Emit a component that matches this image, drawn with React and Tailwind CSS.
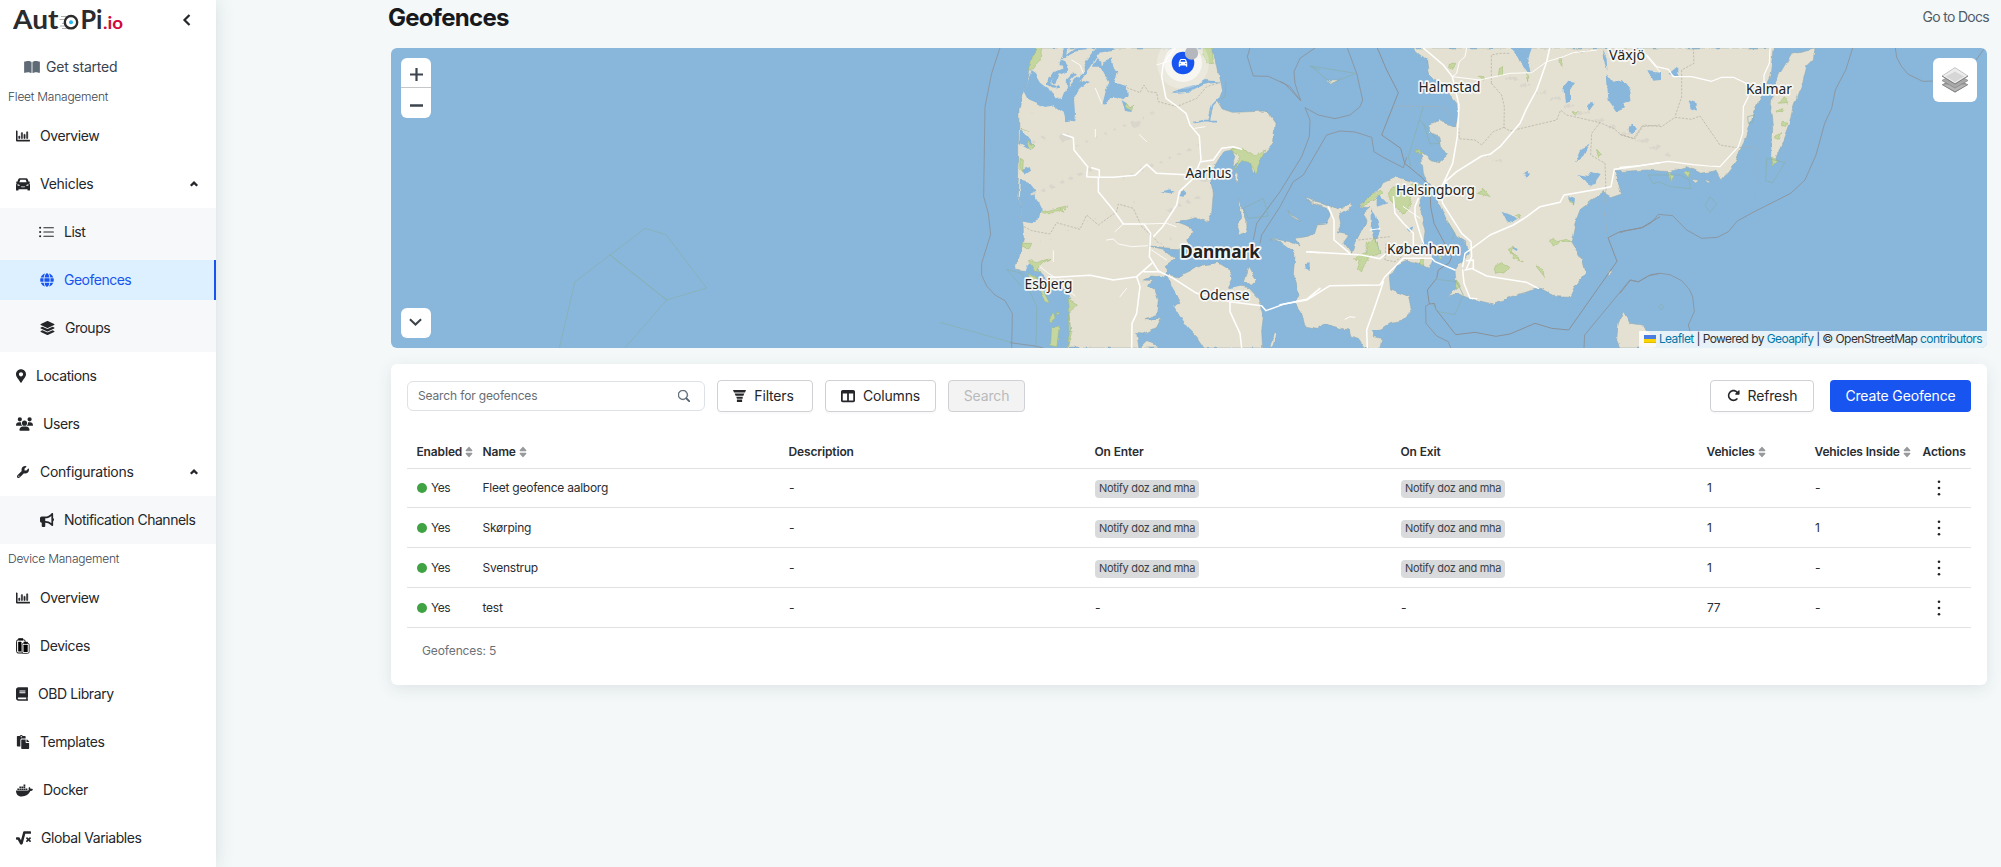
import {
  FaRegChartBar, FaGlobe, FaLayerGroup, FaMapMarkerAlt, FaBook, FaPaste,
  FaDocker, FaSquareRootAlt, FaSort,
} from "react-icons/fa";
import { FaUsers, FaWrench, FaBullhorn, FaBookOpen, FaRotateRight, FaTableColumns, FaCar } from "react-icons/fa6";
import { BsListUl, BsSearch } from "react-icons/bs";

const DevicesIcon = ({ className }) => (
  <svg viewBox="0 0 14 16" className={className}>
    <rect x="0.6" y="1.8" width="8.6" height="13.2" rx="1.6" fill="#fff" stroke="#111" strokeWidth="1" />
    <rect x="2.3" y="0.2" width="4.8" height="2.2" fill="#111" />
    <rect x="2.2" y="3.8" width="3.2" height="9.8" rx="0.5" fill="#000" />
    <rect x="6" y="5.2" width="7.2" height="10.2" rx="1.6" fill="#fff" stroke="#111" strokeWidth="0.8" />
    <rect x="7.6" y="3.8" width="4.2" height="2" fill="#111" />
    <rect x="7.5" y="6.8" width="4.2" height="7.2" rx="0.5" fill="#000" />
  </svg>
);

const CarIcon = ({ className }) => (
  <svg viewBox="0 0 14 14" className={className} fill="currentColor" fillRule="evenodd">
    <path d="M3.900 1.200h6.200c.8 0 1.400.4 1.700 1.200l.9 2.300.9-.2.4.9-.9.600c.6.500.9 1.100.9 1.900v5c0 .4-.3.700-.7.700h-1.100c-.4 0-.7-.3-.7-.7v-.7h-9v.7c0 .4-.3.700-.7.700H.7c-.4 0-.7-.3-.7-.7v-5C0 7.100.3 6.500.9 6L0 5.400l.4-.9.9.2.9-2.300c.3-.8.9-1.200 1.700-1.200zM3.400 5.300h7.200l-.8-2.200c-.1-.2-.2-.3-.4-.3H4.600c-.2 0-.3.1-.4.3zM1.500 7.300v1.200l2.300.4-.5-1.100zM12.500 7.300v1.200l-2.300.4.5-1.100zM4.800 9.300l.6.900h3.200l.6-.9-.6.300H5.400z" />
  </svg>
);

const FunnelIcon = () => (
  <svg viewBox="0 0 13 12" className="h-3 w-[13px]" fill="#24262a">
    <path d="M0 0h13l-1 2.6H1zM1.7 3.6h9.6l-.9 2.2H2.6zM3.3 6.7h6.4v2H3.9zM3.9 9.6h5.2V12H3.9z" />
  </svg>
);

const Chevron = ({ d, className }) => (
  <svg viewBox="0 0 14 14" className={className} fill="none" stroke="currentColor" strokeWidth="2.2">
    <path d={d} />
  </svg>
);

const Logo = () => (
  <svg width="116" height="28" viewBox="0 0 116 28" className="block" fontFamily="Lato, sans-serif">
    <text x="0" y="24" fontSize="26" fontWeight="700" fill="#2b2b2d" textLength="45.500" lengthAdjust="spacingAndGlyphs">Aut</text>
    <g stroke="#9a9a9a" strokeWidth="0.8">
      <path d="M48 11.500h8M46.500 14.500h5M49 18.500h3M47 21h5M49 23.500h7" />
    </g>
    <circle cx="58" cy="17.200" r="6.200" fill="#fff" stroke="#2b2b2d" strokeWidth="2.400" />
    <circle cx="58" cy="17.200" r="2" fill="#22b8f0" />
    <text x="67.500" y="24" fontSize="26" fontWeight="700" fill="#2b2b2d" textLength="22" lengthAdjust="spacingAndGlyphs">Pi</text>
    <text x="90" y="24" fontSize="17" fontWeight="700" fill="#cf0a3c" textLength="20" lengthAdjust="spacingAndGlyphs">.io</text>
  </svg>
);

const NavItem = ({ Icon, iw, label, open, sub, active }) => (
  <div
    className={`flex items-center gap-[10px] ${
      sub
        ? active
          ? "my-1 h-10 border-r-2 border-[#1754f0] bg-[#ddf0ff] pl-10 text-[#1754f0]"
          : "h-12 pl-10"
        : "h-12 pl-4"
    }`}
  >
    <Icon className={`h-[14px] shrink-0 ${iw}`} />
    <span className={`whitespace-nowrap text-sm ${sub ? "tracking-[-0.036em]" : open ? "tracking-[-0.02em]" : "tracking-[-0.03em]"}`}>{label}</span>
    {open && <Chevron d="M2.500 9.500 7 5l4.500 4.500" className="ml-auto mr-[17px] size-[10px] [stroke-width:3.2]" />}
  </div>
);

const Sidebar = () => (
  <aside className="relative z-10 h-full w-[216px] shrink-0 overflow-hidden bg-white text-[#24262a] shadow-[0_0_18px_rgba(40,70,70,0.14)]">
    <div className="flex h-[46px] items-start pl-[13px] pt-[5px]">
      <Logo />
      <Chevron d="M9.500 2 4.500 7l5 5" className="ml-auto mr-[22px] mt-2 size-[14px]" />
    </div>
    <div className="flex h-[38px] items-center gap-[6px] pl-6 pt-1 text-[#3a434d]">
      <FaBookOpen className="h-[14px] w-4 text-[#5f6b76]" />
      <span className="text-sm tracking-[-0.015em]">Get started</span>
    </div>
    <div className="flex h-7 items-center pb-[2px] pl-2 text-xs font-light tracking-[-0.02em] text-[#3d4650]">Fleet Management</div>
    <NavItem Icon={FaRegChartBar} iw="w-[14px] [stroke:currentColor] [stroke-width:16]" label="Overview" />
    <NavItem Icon={CarIcon} iw="w-[14px]" label="Vehicles" open />
    <div className="bg-[#f7f8fa]">
      <NavItem sub Icon={BsListUl} iw="!h-[17px] w-[17px] -ml-[2px] -mr-px" label="List" />
      <NavItem sub active Icon={FaGlobe} iw="w-[14px]" label="Geofences" />
      <NavItem sub Icon={FaLayerGroup} iw="w-[15px]" label="Groups" />
    </div>
    <NavItem Icon={FaMapMarkerAlt} iw="w-[10px]" label="Locations" />
    <NavItem Icon={FaUsers} iw="w-[17px]" label="Users" />
    <NavItem Icon={FaWrench} iw="w-[14px] p-px" label="Configurations" open />
    <div className="bg-[#f7f8fa]">
      <NavItem sub Icon={FaBullhorn} iw="w-[14px]" label="Notification Channels" />
    </div>
    <div className="flex h-[30px] items-center pl-2 text-xs font-light tracking-[-0.02em] text-[#3d4650]">Device Management</div>
    <NavItem Icon={FaRegChartBar} iw="w-[14px] [stroke:currentColor] [stroke-width:16]" label="Overview" />
    <NavItem Icon={DevicesIcon} iw="w-[14px] !h-4" label="Devices" />
    <NavItem Icon={FaBook} iw="w-3" label="OBD Library" />
    <NavItem Icon={FaPaste} iw="w-[14px]" label="Templates" />
    <NavItem Icon={FaDocker} iw="w-[17px] !h-[17px]" label="Docker" />
    <NavItem Icon={FaSquareRootAlt} iw="w-[15px]" label="Global Variables" />
  </aside>
);

/* Map geometry. Every layer is drawn at three times its size on screen. */
const WEST = "translate(549 -8) scale(.33333)";
const EAST = "translate(889 -8) scale(.33333)";
const FAR_EAST = "translate(1229 -48) scale(.33333)";
const SEA = "translate(-11 -48) scale(.33333)";

const westLand = [
  // Jutland
  "M290 24 278 55 268 85 258 130 245 170 237 210 236 300 236 400 232 470 240 500 250 560 250 600 235 660 227 690 270 697 300 740 345 772 380 780 388 830 392 880 380 924H597L590 880 612 882 650 862 665 832 640 838 612 836 650 822 655 780 645 750 625 735 640 722 610 720 635 708 670 712 680 690 672 680 705 655 670 628 625 617 690 625 755 628 740 600 764 572 750 560 710 545 770 530 800 548 815 520 820 460 812 420 820 385 850 335 880 330 886 345 875 380 905 362 930 366 940 402 955 360 1000 312 1005 250 980 213 880 217 850 207 833 180 845 150 838 120 830 80 818 24Z",
  // Fyn
  "M684 702 720 712 735 700 790 674 835 668 870 690 880 705 862 745 895 738 925 742 955 775 970 830 965 870 968 924H792L770 890 750 870 725 862 712 835 700 800 720 790 695 740Z",
  "M925 675 935 700 948 720 935 732 910 728 918 700Z",
  // Samsø, Anholt and the small isles
  "M893 475 905 500 920 540 921 575 900 585 893 560 905 530Z",
  "M885 400 897 400 895 425 886 420ZM990 924 1000 882 1008 880 998 924ZM1045 515 1075 540 1060 530ZM1095 470 1140 492 1115 492Z",
  "M600 924 620 905 650 915 655 924Z",
];

const eastLand = [
  // Sjælland
  "M-30 598 0 600 30 605 60 618 48 595 78 590 100 580 108 555 140 552 150 525 140 505 110 495 80 482 112 488 150 498 175 510 212 490 205 508 180 525 185 550 172 578 205 585 190 605 215 640 225 610 245 570 258 545 248 520 270 500 235 497 270 470 310 430 350 411 400 425 432 445 420 480 425 530 435 575 430 610 440 640 458 660 445 685 420 672 385 660 350 675 328 710 332 750 385 770 396 815 370 840 330 848 300 870 280 875 280 890 305 895 300 924H255L235 895 210 888 205 870 170 862 130 850 110 865 75 858 65 820 45 790 60 770 40 700 45 650 35 630 0 605Z",
  // Sweden
  "M400 24 440 60 445 100 490 140 530 190 535 230 525 260 480 243 450 255 447 275 480 290 485 320 502 345 480 365 455 360 405 328 425 345 430 400 455 440 500 540 530 590 560 610 565 640 525 690 530 745 500 768 535 760 570 775 640 792 690 770 780 745 830 770 870 772 885 740 915 700 905 660 873 610 885 550 900 510 970 455 995 470 1025 460 1012 425 1005 395 1100 390 1170 395 1220 380 1260 400 1310 392 1325 420 1345 395 1365 370 1385 320 1400 290 1420 220 1450 150 1470 110 1480 24Z",
  // Öland
  "M1605 24 1600 60 1580 80 1570 120 1540 200 1525 260 1495 340 1480 372 1475 360 1478 260 1472 210 1480 140 1500 100 1535 40Z",
  // Bornholm
  "M1030 815 1050 850 1085 855 1130 900 1130 924H1020L1010 900 1015 850Z",
  "M142 120 178 120 155 132ZM22 515 60 540 45 535ZM985 690 998 695 985 705Z",
  "M1235 415 1260 418 1250 426ZM1270 420 1290 430 1280 432Z",
];

const westWater = [
  "M272 90 285 100 300 125 325 145 345 178 368 175 378 150 400 132 430 120 450 126 430 137 415 152 402 178 405 215 403 240 375 244 368 215 350 203 340 196 315 201 290 188 262 176 250 152 262 120Z",
  "M455 80 470 55 490 65 515 55 523 90 535 95 522 125 560 135 563 165 550 178 530 170 510 172 495 198 488 190 498 150 508 130 480 80Z",
  "M545 180 560 190 565 205 578 200 570 216 555 212Z",
  "M240 260 262 290 285 318 270 330 238 312Z",
  "M240 418 265 425 285 450 288 475 305 510 300 540 275 550 248 545 236 480Z",
  "M245 390 265 382 270 395 255 405ZM256 610 275 615 270 628 258 625Z",
  "M265 670 290 680 300 700 330 730 380 745 392 790 385 850 388 900 376 924H300L262 740 255 700Z",
  "M662 455 690 448 708 456 690 460ZM718 468 728 450 742 464 730 470Z",
  "M692 160 760 138 795 120 840 125 790 135 750 155Z",
  "M870 700 905 715 915 735 890 742 866 748 880 725Z",
];

const eastWater = [
  "M290 480 300 465 325 490 290 500ZM275 505 288 530 300 570 290 600 300 640 258 640 280 600 275 560Z",
  "M850 140 865 122 885 125 870 150 870 185 855 190ZM690 24 755 24 745 60 755 95 735 90 715 50Z",
  "M980 100 1000 125 1025 120 1050 150 1055 180 1030 190 1035 205 1010 215 985 180ZM966 28 980 60 982 90 970 60Z",
  "M922 200 935 182 945 190 930 210ZM1043 262 1058 254 1068 268 1056 282 1044 276ZM885 370 905 325 928 315 910 350Z",
  "M892 402 925 408 935 395 962 405 945 430 930 440 915 420ZM730 400 740 396 750 408 740 416ZM665 515 690 525 715 540 700 550 680 545Z",
  "M868 468 888 478 885 495 870 488ZM698 620 715 628 710 636 700 630ZM1105 90 1140 95 1140 120 1120 122Z",
  "M1165 105 1195 80 1195 112ZM1225 180 1250 190 1250 212 1235 205ZM380 570 398 560 390 580ZM72 672 86 670 86 690 74 686ZM370 470 385 475 378 490Z",
  "M275 870 300 870 290 892Z",
];

const westGreen = [
  "M290 24 305 24 300 60 285 85 265 90 275 50ZM790 24 818 24 820 70 800 72 790 50Z",
  "M875 328 905 325 950 345 975 328 965 355 948 400 930 370 905 365 882 390 900 350Z",
  "M305 515 380 498 375 510 360 506 372 520 355 512 312 520ZM240 355 250 360 248 395 240 385Z",
  "M240 262 265 272M258 300 285 318 270 330ZM245 610 278 610 270 630 250 620ZM265 660 290 668 330 655 300 675 290 690 300 700 285 695Z",
  "M262 700 290 715 328 788 315 785 295 745ZM385 780 412 795 390 818ZM335 860 358 860 350 920 332 915ZM328 840 340 820 345 835 332 845ZM350 815 360 820 350 825Z",
  "M555 200 560 190 570 205 578 195 575 215ZM384 820 394 880 382 924 388 880Z",
];

const eastGreen = [
  "M240 497 275 465 300 450 310 458 285 480ZM340 440 375 445 400 430 420 440 385 460 395 490 370 525 355 505 330 480 325 460Z",
  "M220 655 260 640 265 610 285 590 300 640 270 645 245 695 232 688 240 665Z",
  "M508 70 524 70 518 88 505 85ZM655 85 668 82 668 102 652 104ZM597 108 613 110 608 118ZM838 55 848 58 845 82ZM740 100 750 105 746 125Z",
  "M592 460 610 450 627 470ZM685 625 700 618 692 640 730 665 700 655ZM645 678 665 668 686 682 672 702 650 698ZM768 678 788 685 793 710Z",
  "M808 600 820 592 830 605 860 598 872 608 840 605 820 618ZM876 215 895 215 888 230ZM950 328 965 345 955 352ZM405 328 425 342 410 338ZM705 528 718 522 720 535ZM868 480 885 495 872 490Z",
  "M420 660 430 655 430 680 420 675ZM530 720 538 740 525 745ZM475 640 485 650 480 660ZM1495 190 1515 188 1522 190 1510 170ZM1488 210 1512 206 1508 215 1490 214ZM1505 250 1520 252 1518 262 1505 260ZM1488 285 1502 278 1495 298 1485 295ZM1475 352 1495 360 1480 378ZM1165 395 1180 410 1170 425ZM1210 395 1230 392 1225 412Z",
];

const cities = [
  ["Aarhus", 817.500, 130.300, 46], ["Esbjerg", 657.500, 241.200, 48], ["Odense", 833.500, 251.700, 50],
  ["Halmstad", 1058.500, 44, 62], ["Helsingborg", 1044.500, 147.200, 79], ["København", 1032.500, 205.500, 73],
  ["Växjö", 1236, 11.800, 36], ["Kalmar", 1378, 45.700, 46],
];

const speckles = Array.from({ length: 90 }, (_, i) => [
  i < 45 ? 270 + ((i * 137) % 520) : 1620 + ((i * 173) % 560),
  i < 45 ? 220 + ((i * 97) % 400) : 100 + ((i * 83) % 270),
  3 + (i % 4) * 2,
]);

const MapCanvas = () => (
  <svg viewBox="0 0 1596 300" className="block h-full w-full" fill="none">
    <defs>
      <filter id="coast" x="-5%" y="-5%" width="110%" height="110%">
        <feTurbulence type="fractalNoise" baseFrequency="0.09" numOctaves="3" seed="4" />
        <feDisplacementMap in="SourceGraphic" scale="5" xChannelSelector="R" yChannelSelector="G" />
      </filter>
    </defs>
    <rect width="1596" height="300" fill="#89b7dc" />
    <g filter="url(#coast)">
      <g transform={WEST} fill="#e5e1d2" stroke="#8ba5ac" strokeWidth="1.500">
        {westLand.map((d) => <path key={d} d={d} />)}
      </g>
      <g transform={EAST} fill="#e5e1d2" stroke="#8ba5ac" strokeWidth="1.500">
        {eastLand.map((d) => <path key={d} d={d} />)}
      </g>
      <g transform={WEST} fill="#89b7dc">
        {westWater.map((d) => <path key={d} d={d} />)}
        <g fill="none" stroke="#89b7dc" strokeLinejoin="round">
          <path d="M378 24 374 50 365 70 378 88 350 100 340 130" strokeWidth="13" />
          <path d="M378 50 405 30 440 26M385 150 385 120 410 95" strokeWidth="9" />
          <path d="M398 140 420 108 440 80 460 50 475 30 520 24" strokeWidth="17" />
          <path d="M344 100 325 130 345 142 362 136" strokeWidth="9" />
          <path d="M835 178 818 195 808 240M760 248 790 242 828 242" strokeWidth="5" />
          <path d="M650 712 680 735 695 760 690 800 680 850 690 924M690 800 720 850 760 900" strokeWidth="22" />
        </g>
      </g>
      <g transform={WEST} fill="#e5e1d2">
        <path d="M362 62 385 45 405 35 428 50 432 95 415 110 402 100 395 75ZM332 145 362 140 355 172 342 165ZM484 60 494 68 485 76Z" />
      </g>
      <g transform={EAST} fill="#89b7dc">{eastWater.map((d) => <path key={d} d={d} />)}</g>
      <g transform={WEST} fill="#c5d79f" stroke="#9fba74" strokeWidth="1.500">
        {westGreen.map((d) => <path key={d} d={d} />)}
      </g>
      <g transform={EAST} fill="#c5d79f" stroke="#9fba74" strokeWidth="1.500">
        {eastGreen.map((d) => <path key={d} d={d} />)}
      </g>
      <g transform={WEST} fill="#d9d6cc">
        {speckles.map(([x, y, r], i) => <path key={i} d={`M${x} ${y}l${r} -${r} ${r} ${r} -${r} ${r * 0.6}z`} />)}
        <path d="M358 285 385 280 395 300 370 308ZM570 245 600 240 595 262 580 268ZM775 390 810 385 815 420 780 425Z" />
      </g>
    </g>

    {/* Territorial borders at sea */}
    <g stroke="#8a9197" strokeWidth="2.500" strokeLinejoin="round">
      <g transform={WEST}>
        <path d="M180 24 155 100 135 200 133 330 131 470 145 520 152 583 125 670 125 705 140 738 165 765 195 782 217 820 215 924M210 908 285 918 310 924" />
      </g>
      <g transform={EAST}>
        <path d="M-90 24-98 50-80 108-35 109 15 132 62 182 45 130 42 95 60 55 105 24M0 124 30 140 62 182M202 24 230 100 248 180 240 200 210 225 165 236 115 225 75 203 90 240 88 290 65 350 0 455-70 550-80 600M0 500 40 425 70 405 140 285 180 273 225 276 275 292 282 335 310 352 370 383 380 352M0 500-55 585-60 610" />
        <path d="M292 24 320 90 355 158 305 285 362 325 374 370 425 412 450 440 452 500 462 550 515 650 508 668 475 690 470 715 442 750 448 792 463 790 468 808 527 884 585 877 648 889 690 882 765 850 815 865 866 870 1011 664 984 593 1020 575 1085 563 1140 530" strokeWidth="3" />
        <path d="M448 792 437 798 438 850 470 888 505 905 512 924M912 924 914 885 1050 720 1075 726 1105 708 1140 700" />
      </g>
      <g transform={FAR_EAST}>
        <path d="M0 698 20 692 68 683 95 667 115 643 158 647 200 690 245 715 292 712 325 695 352 663 405 634 512 580 555 540 588 465 614 370 635 325 646 270 678 208 698 144M826 144 830 172 845 200 865 223 908 244 945 243M1068 180 1092 147" />
        <path d="M0 880 32 840 55 845 92 824 120 820 150 824 185 842 208 868 218 890 223 935 205 975 212 1000" />
      </g>
    </g>
    <g strokeWidth="2" stroke="#88afa8">
      <path transform={SEA} d="M538 1044 585 845 690 765 795 685 858 704 980 864 860 900 735 1044" />
      <path transform={SEA} d="M690 765 860 900" strokeWidth="3" />
      <path transform={WEST} d="M0 847 212 907M200 688 245 700 290 800 288 924M910 505 970 475 985 528 925 535ZM858 125 855 170 842 178M1110 80 1140 90M200 688 245 740" />
      <path transform={EAST} d="M92 78 227 100 155 130ZM430 200 385 350 395 390M430 250 450 312 480 310 420 240M470 718 530 725 550 765 525 824 475 815 455 790M500 540 525 580 515 600" />
      <path transform={FAR_EAST} d="M440 475 495 487 458 548 437 542ZM270 590 290 612 270 637 255 615ZM85 525 100 552 115 545 150 560 212 566 208 540 180 525ZM116 920 124 912 131 921 123 930ZM383 350 403 345 398 368 385 370Z" />
    </g>

    {/* Regional borders */}
    <g stroke="#aeaca1" strokeWidth="2" strokeDasharray="7 4">
      <path transform={WEST} d="M560 143 600 158 612 135 625 155 650 158 655 185 710 200 770 175 800 140 840 128M252 560 275 572 330 582 350 548 420 568 440 525 475 555 530 515 535 492 580 505 605 560 640 592 658 612" />
      <path transform={EAST} d="M634 130 634 45 660 40 690 40M634 130 665 165 673 200 672 262 640 275 605 315 585 300 538 296 536 258M672 262 690 273 830 240 842 210 860 225 960 248 1000 265 1025 285 1060 296 1085 260 1140 255M960 248 935 280 932 345 975 370 978 450 970 500 984 593M340 198 490 200 530 255M318 610 315 660 345 665 365 650M235 600 330 590M888 24 900 38 930 30" />
      <path transform={FAR_EAST} d="M0 403 45 416 70 375 125 380 165 352 215 358 240 348 300 435 350 443 408 440 406 630M220 144 222 190 185 210 185 290 165 350" />
    </g>

    {/* Roads */}
    <g stroke="#fff" strokeWidth="4.500" strokeLinejoin="round" strokeLinecap="round">
      <g transform={WEST}>
        <path d="M705 24 670 70 665 110 678 175 710 198 738 220 750 255 778 288 783 360 760 415 718 455 710 495 668 560 640 590M370 283 400 293 402 330 443 380 440 410 475 412 475 455 520 510 550 552 612 552 632 580 628 650 655 693 700 715 770 760" />
        <path d="M455 383 478 390 478 412 520 412 585 406 620 373 650 400 738 404M783 365 820 360 845 325 880 320 905 328M325 710 345 712 450 706 520 720 590 710 635 670M590 710 600 740 590 820 576 850 575 924M612 695 660 695M770 760 870 785 965 797 978 812 1030 793 1100 778 1140 745M870 785 870 815 900 880 905 924M1100 635 1140 638" />
        <path d="M395 60 420 75 430 100M466 145 485 190M466 268 466 292M598 284 620 305M500 600 520 597 535 612 575 620 625 617M550 552 525 575M612 552 680 550 708 560M635 630 680 660M345 712 325 700 300 680M340 632 340 665M540 770 560 745M380 745 405 768M765 265 795 260M650 75 690 62" strokeWidth="2.500" />
      </g>
      <g transform={EAST}>
        <path d="M430 24 490 75 517 110 537 195 532 290 518 370 490 430 480 450 488 490 545 580 573 605 575 650 560 685M809 24 800 65 770 150 740 205 720 250 660 320 630 343 605 348 530 395 490 430" />
        <path d="M548 680 555 640 610 600 630 585 700 555 740 530 780 500 840 487 852 465 940 450 993 440 1003 388 1060 380 1140 368M575 685 620 708 740 727 775 745M548 690 552 730 570 775 590 776M525 690 465 665 455 655 370 655 315 710 300 735 150 737 80 780 0 794M310 725 285 800 260 870 262 924M560 662 580 660 580 685 555 690" />
        <path d="M80 635 160 640 245 645 300 656 315 643M145 500 162 540 162 600 210 640M340 470 345 520 370 550 400 580 400 620M415 475 405 500 405 530 420 580 430 610" />
        <path d="M560 24 555 50 538 65 530 100 517 110 600 120 690 100 755 98 800 65 850 50 880 38 950 30M370 500 420 535M270 570 300 566M195 838 210 830 225 832M1100 50 1140 95" strokeWidth="2.800" />
      </g>
      <g transform={FAR_EAST}>
        <path d="M0 502 60 497 145 484 220 494 265 498 300 500 355 440 368 400 370 320 385 290M450 144 448 190 432 225 432 250M80 165 110 200 145 208 160 230 215 230 275 244 305 232 340 232 375 248 390 270" strokeWidth="3.500" />
      </g>
    </g>

    {/* Labels */}
    <g fontFamily="'Noto Sans', sans-serif" fill="#222" stroke="#f7f8f6" strokeWidth="3.400" strokeLinejoin="round" textAnchor="middle" style={{ paintOrder: "stroke" }}>
      {cities.map(([name, x, y, w]) => (
        <text key={name} x={x} y={y} fontSize="14.600" textLength={w} lengthAdjust="spacingAndGlyphs">{name}</text>
      ))}
      <text x="829" y="209.700" fontSize="18.500" fontWeight="700" textLength="80" lengthAdjust="spacingAndGlyphs">Danmark</text>
    </g>
    <circle cx="792" cy="15" r="26" fill="#fff" opacity=".25" />
    <circle cx="792" cy="15" r="19" fill="#fff" opacity=".6" />
    <circle cx="792" cy="15" r="11.300" fill="#1754f0" />
    <circle cx="800.500" cy="5" r="6.700" fill="#b4b8be" />
    <FaCar x="787.500" y="10.400" size="9" color="#fff" />
  </svg>
);

const LayersIcon = () => (
  <svg viewBox="0 0 26 26" className="size-[26px]">
    <path d="M0 17.500 13 10l13 7.500L13 25.500z" fill="#8f8f8f" />
    <path d="M0 17.500 13 25l13-7.500" fill="#b5b5b5" stroke="#777" strokeWidth=".8" />
    <path d="M0 13.500 13 6l13 7.500L13 21z" fill="#a9a9a9" stroke="#8a8a8a" strokeWidth=".8" />
    <path d="M0 9 13 .6 26 9 13 17z" fill="#ececec" stroke="#999" strokeWidth=".5" />
    <path d="M4 9.500 13 4.500l9 5L13 15z" fill="#d6d6d6" />
    <path d="M0 9 13 17 26 9" fill="none" stroke="#777" strokeWidth=".9" />
  </svg>
);

const MapPanel = () => (
  <section className="relative h-[300px] overflow-hidden rounded-md">
    <MapCanvas />
    <div className="absolute left-[10px] top-[10px] flex w-[30px] flex-col overflow-hidden rounded-md bg-white">
      <div className="flex h-[30px] items-center justify-center border-b border-[#c4c6c8]">
        <svg viewBox="0 0 13 13" className="mt-1 size-[13px]" stroke="#3c444d" strokeWidth="2.200"><path d="M0 6.500h13M6.500 0v13" /></svg>
      </div>
      <div className="flex h-[30px] items-center justify-center">
        <svg viewBox="0 0 13 13" className="mt-[4px] size-[13px]" stroke="#3c444d" strokeWidth="2.400"><path d="M0 6.500h13" /></svg>
      </div>
    </div>
    <div className="absolute bottom-[10px] left-[10px] flex size-[30px] items-center justify-center rounded-md bg-white pb-[3px] pr-px text-[#3c444d]">
      <Chevron d="M1 4.500 7 10.200l6-5.700" className="size-[13px]" />
    </div>
    <div className="absolute right-[10px] top-[10px] flex size-11 items-center justify-center rounded-md bg-white">
      <LayersIcon />
    </div>
    <div className="absolute bottom-0 right-0 flex h-[17px] items-center whitespace-pre bg-white/80 pb-px pl-[5px] pr-[5px] text-xs tracking-[-0.049em] text-[#333]">
      <svg viewBox="0 0 12 8" className="mr-[3px] h-2 w-3"><path fill="#4C7BE1" d="M0 0h12v4H0z" /><path fill="#FFD500" d="M0 4h12v3H0z" /><path fill="#E0BC00" d="M0 7h12v1H0z" /></svg>
      <span className="text-[#0078a8]">Leaflet</span>
      <span> | Powered by </span>
      <span className="text-[#0078a8]">Geoapify</span>
      <span> | © OpenStreetMap </span>
      <span className="text-[#0078a8]">contributors</span>
    </div>
  </section>
);

const btn = "flex h-8 items-center justify-center rounded-[4px] border border-[#cfd1d4] bg-white pb-px text-sm tracking-[-0.012em] shadow-[0_2px_0_rgba(0,0,0,0.02)]";

const Toolbar = () => (
  <div className="flex h-8 items-center text-[#24262a]">
    <div className="flex h-[30px] w-[298px] items-center justify-between rounded-md border border-[#dfe2e5] pl-[10px] pr-[14px]">
      <span className="text-xs tracking-[-0.012em] text-[#676d73]">Search for geofences</span>
      <BsSearch className="size-3 text-[#566371]" stroke="currentColor" strokeWidth="0.7" />
    </div>
    <div className={`${btn} ml-3 w-24 gap-2 !pr-[3px]`}><FunnelIcon />Filters</div>
    <div className={`${btn} ml-3 w-[111px] gap-2`}><FaTableColumns className="size-[14px]" />Columns</div>
    <div className="ml-3 flex h-8 w-[77px] items-center justify-center rounded-[4px] border border-[#cfd1d4] bg-[#f3f3f3] pb-px text-sm tracking-[-0.01em] text-[#b9babb]">Search</div>
    <div className={`${btn} ml-auto w-[104px] gap-2`}><FaRotateRight className="size-[13px]" />Refresh</div>
    <div className="ml-4 flex h-8 w-[141px] items-center justify-center rounded-[4px] bg-[#1754f0] pb-px text-sm tracking-[-0.01em] text-white">Create Geofence</div>
  </div>
);

const COLS = "grid grid-cols-[66px_306px_306px_306px_306px_108px_108px_58px] items-center";
const HEAD = [["Enabled", 1], ["Name", 1], ["Description"], ["On Enter"], ["On Exit"], ["Vehicles", 1], ["Vehicles Inside", 1], ["Actions"]];
const NOTIFY = "Notify doz and mha";
const ROWS = [
  ["Fleet geofence aalborg", NOTIFY, NOTIFY, "1", "-"],
  ["Skørping", NOTIFY, NOTIFY, "1", "1"],
  ["Svenstrup", NOTIFY, NOTIFY, "1", "-"],
  ["test", "-", "-", "77", "-"],
];

const Tag = ({ children }) =>
  children === "-" ? (
    <span className="px-[10px]">-</span>
  ) : (
    <span className="ml-[10px] mt-[2px] flex h-[18px] w-[104px] items-center justify-center whitespace-nowrap rounded-[4px] bg-[#d9dadc] pb-px text-[11px] tracking-[-0.028em] text-[#3b4148]">{children}</span>
  );

const Table = () => (
  <div className="mt-6 text-xs tracking-[-0.02em] text-[#2a2d31]">
    <div className={`${COLS} h-[33px] border-b border-[#e0e1e2] font-semibold tracking-[-0.012em]`}>
      {HEAD.map(([h, sort]) => (
        <span key={h} className="flex items-center gap-[3px] whitespace-nowrap pl-[9.5px]">
          {h}{sort && <FaSort className="h-3 w-[8px] shrink-0 scale-y-110 text-[#97999c]" />}
        </span>
      ))}
    </div>
    {ROWS.map(([name, enter, exit, vehicles, inside], i) => (
      <div key={name} className={`${COLS} border-b border-[#e0e1e2] ${i === 0 ? "h-[39px]" : "h-10"}`}>
        <span className="flex items-center gap-1 pl-[10px] tracking-[-0.04em]"><i className="size-[10px] rounded-full bg-[#3fa344]" />Yes</span>
        <span className="px-[9.5px]">{name}</span>
        <span className="px-[10px]">-</span>
        <Tag>{enter}</Tag>
        <Tag>{exit}</Tag>
        <span className="px-[10px]">{vehicles}</span>
        <span className="px-[10px]">{inside}</span>
        <span className="pl-[24px]">
          <svg viewBox="0 0 4 16" className="h-4 w-1" fill="#222"><circle cx="2" cy="1.800" r="1.300" /><circle cx="2" cy="8" r="1.300" /><circle cx="2" cy="14.200" r="1.300" /></svg>
        </span>
      </div>
    ))}
    <div className="pl-[15px] pt-[15px] leading-4 tracking-[-0.01em] text-[#6c7177]">Geofences: 5</div>
  </div>
);

export default function App() {
  return (
    <div className="flex h-[867px] w-[2001px] overflow-hidden bg-[#f4f8f9] font-['Inter',sans-serif]">
      <Sidebar />
      <main className="flex flex-1 flex-col pl-[175px] pr-[14px]">
        <header className="flex h-12 items-start justify-between">
          <h1 className="-ml-[3px] pt-[2px] text-2xl font-bold tracking-[-0.03em] text-[#17191c]">Geofences</h1>
          <span className="-mr-[2px] pt-[7px] text-sm leading-5 tracking-[-0.05em] text-[#505c68]">Go to Docs</span>
        </header>
        <MapPanel />
        <section className="mt-4 h-[321px] rounded-md bg-white p-4 shadow-[0_4px_16px_rgba(40,60,70,0.1)]">
          <Toolbar />
          <Table />
        </section>
      </main>
    </div>
  );
}
